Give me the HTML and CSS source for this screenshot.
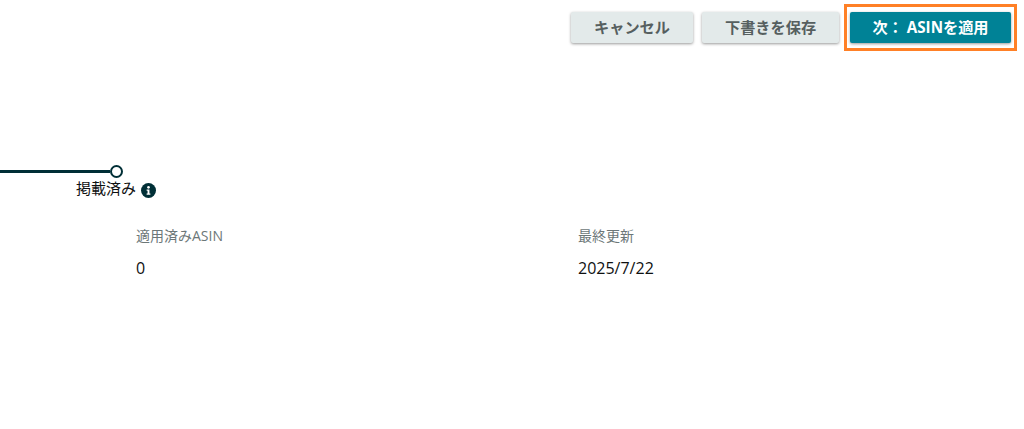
FILE: index.html
```html
<!DOCTYPE html>
<html lang="ja">
  <head>
    <meta charset="UTF-8" />
    <meta name="viewport" content="width=device-width, initial-scale=1.0" />
    <title>ASIN</title>
    <link rel="stylesheet" href="styles.css">
  </head>
  <body>
    <div class="actions">
      <button class="btn btn-secondary btn-cancel">キャンセル</button>
      <button class="btn btn-secondary btn-draft">下書きを保存</button>
      <div class="highlight">
        <button class="btn btn-primary">次： ASINを適用</button>
      </div>
    </div>
    <div class="status">
      <div class="track">
        <div class="track-line"></div>
        <div class="track-dot"></div>
      </div>
      <div class="status-label">
        <span>掲載済み</span>
        <svg class="info-icon" viewBox="0 0 16 16" width="15" height="15">
          <circle cx="8" cy="8" r="8" fill="#002f36" />
          <circle cx="8" cy="4.6" r="1.4" fill="#fff" />
          <path d="M6 7h3v4.2h1v1.3H6v-1.3h1V8.3H6z" fill="#fff" />
        </svg>
      </div>
    </div>
    <div class="details">
      <div class="detail">
        <div class="detail-label">適用済みASIN</div>
        <div class="detail-value">0</div>
      </div>
      <div class="detail">
        <div class="detail-label">最終更新</div>
        <div class="detail-value">2025/7/22</div>
      </div>
    </div>
  </body>
</html>
```

FILE: styles.css
```css
body {
  margin: 0;
  padding: 0;
  height: 429px;
  overflow: hidden;
  background-color: white;
  font-family: "Open Sans", "Noto Sans CJK JP", sans-serif;
  font-size: 14px;
  color: #0f1111;
}
.actions {
  display: flex;
  justify-content: flex-end;
  align-items: center;
  padding: 4px 7px 0 0;
}
.btn {
  height: 31px;
  padding: 0 0 3px;
  border: none;
  border-radius: 2px;
  font-family: inherit;
  font-size: 15.2px;
  font-weight: 700;
  cursor: pointer;
}
.btn-secondary {
  background-color: #e3eaea;
  color: #565f5f;
  box-shadow: 0 1px 3px rgba(0, 0, 0, 0.4);
}
.btn-cancel {
  width: 122px;
  margin-right: 9px;
}
.btn-draft {
  width: 137px;
  margin-right: 5px;
}
.btn-primary {
  display: block;
  width: 161px;
  background-color: #008296;
  color: white;
  box-shadow: 0 1px 3px rgba(0, 0, 0, 0.4);
}
.highlight {
  padding: 5px 3px;
  border: 3px solid #ff8026;
}
.status {
  margin-top: 114px;
  width: 160px;
}
.track {
  display: flex;
  align-items: center;
  height: 13px;
  width: 123px;
}
.track-line {
  flex: 1;
  height: 3px;
  background-color: #002f36;
}
.track-dot {
  width: 9px;
  height: 9px;
  border: 2px solid #002f36;
  border-radius: 50%;
  background-color: white;
}
.status-label {
  display: flex;
  align-items: flex-start;
  gap: 5px;
  height: 22px;
  padding-left: 76px;
  font-size: 15px;
  line-height: 20px;
  white-space: nowrap;
}
.info-icon {
  margin-top: 5px;
}
.details {
  display: grid;
  grid-template-columns: 442px 1fr;
  padding-left: 136px;
  margin-top: 26px;
}
.detail-label {
  color: #6c7778;
  line-height: 20px;
}
.detail-value {
  margin-top: 12px;
  font-size: 16px;
  line-height: 20px;
}
```
